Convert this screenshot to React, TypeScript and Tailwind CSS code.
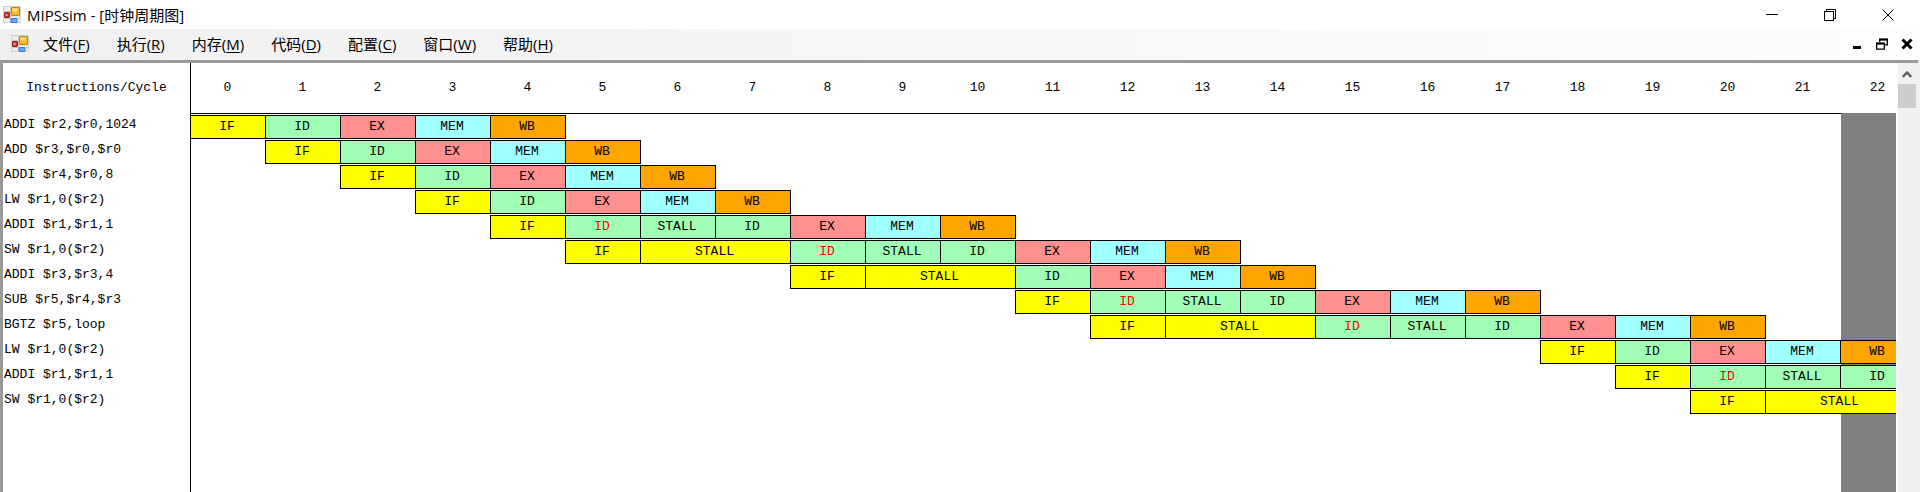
import React from "react";

type Stage = "IF" | "ID" | "EX" | "MEM" | "WB";

interface Segment {
  stage: Stage;
  label?: string;
  span?: number;
  hazard?: boolean;
}

interface Instruction {
  text: string;
  start: number;
  segments: Segment[];
}

const CYCLES = 23;
const EXECUTED = 22;

const IF: Segment = { stage: "IF" };
const ID: Segment = { stage: "ID" };
const ID_HAZARD: Segment = { stage: "ID", hazard: true };
const ID_STALL: Segment = { stage: "ID", label: "STALL" };
const IF_STALL: Segment = { stage: "IF", label: "STALL", span: 2 };
const EX: Segment = { stage: "EX" };
const MEM: Segment = { stage: "MEM" };
const WB: Segment = { stage: "WB" };

const program: Instruction[] = [
  { text: "ADDI $r2,$r0,1024", start: 0, segments: [IF, ID, EX, MEM, WB] },
  { text: "ADD $r3,$r0,$r0", start: 1, segments: [IF, ID, EX, MEM, WB] },
  { text: "ADDI $r4,$r0,8", start: 2, segments: [IF, ID, EX, MEM, WB] },
  { text: "LW $r1,0($r2)", start: 3, segments: [IF, ID, EX, MEM, WB] },
  { text: "ADDI $r1,$r1,1", start: 4, segments: [IF, ID_HAZARD, ID_STALL, ID, EX, MEM, WB] },
  { text: "SW $r1,0($r2)", start: 5, segments: [IF, IF_STALL, ID_HAZARD, ID_STALL, ID, EX, MEM, WB] },
  { text: "ADDI $r3,$r3,4", start: 8, segments: [IF, IF_STALL, ID, EX, MEM, WB] },
  { text: "SUB $r5,$r4,$r3", start: 11, segments: [IF, ID_HAZARD, ID_STALL, ID, EX, MEM, WB] },
  { text: "BGTZ $r5,loop", start: 12, segments: [IF, IF_STALL, ID_HAZARD, ID_STALL, ID, EX, MEM, WB] },
  { text: "LW $r1,0($r2)", start: 18, segments: [IF, ID, EX, MEM, WB] },
  { text: "ADDI $r1,$r1,1", start: 19, segments: [IF, ID_HAZARD, ID_STALL, ID] },
  { text: "SW $r1,0($r2)", start: 20, segments: [IF, IF_STALL] },
];

const stageColor: Record<Stage, string> = {
  IF: "bg-[#ffff00]",
  ID: "bg-[#a0ffb4]",
  EX: "bg-[#ff9090]",
  MEM: "bg-[#a0ffff]",
  WB: "bg-[#ffa500]",
};

const menus: [string, string][] = [
  ["文件", "F"],
  ["执行", "R"],
  ["内存", "M"],
  ["代码", "D"],
  ["配置", "C"],
  ["窗口", "W"],
  ["帮助", "H"],
];

function AppIcon() {
  return (
    <svg viewBox="0 0 18 18" className="size-[18px] shrink-0" aria-hidden="true">
      <rect x="0.5" y="0.5" width="17" height="16" fill="#ececec" stroke="#d0d0d0" />
      <path d="M7.5 1v16M1 12.5h16M1 5.5h6" stroke="#c8c8c8" />
      <rect x="8.5" y="1.5" width="8" height="8" rx="0.5" fill="#f5b92a" stroke="#b98512" />
      <rect x="9.5" y="2.5" width="5" height="3" fill="#ffe07a" />
      <rect x="1.5" y="6.5" width="5" height="5" rx="0.5" fill="#c93527" stroke="#9a2118" />
      <rect x="2.5" y="8" width="2" height="2" fill="#f0a198" />
      <rect x="8" y="12.5" width="6" height="4" rx="0.5" fill="#6aa8f6" stroke="#3a76d0" />
    </svg>
  );
}

function TitleBar() {
  return (
    <header className="flex h-[29px] shrink-0 items-center bg-white pl-[3px]">
      <AppIcon />
      <h1 className="ml-1.5 flex-1 text-[15px] leading-5">MIPSsim - [时钟周期图]</h1>
      <button aria-label="Minimize" className="flex h-7 w-[58px] items-center justify-center">
        <svg viewBox="0 0 12 12" className="size-3" stroke="#000" fill="none" shapeRendering="crispEdges">
          <path d="M0 5.5h12" />
        </svg>
      </button>
      <button aria-label="Restore" className="flex h-7 w-[58px] items-center justify-center">
        <svg viewBox="0 0 12 12" className="size-3" stroke="#000" fill="none" shapeRendering="crispEdges">
          <path d="M0.5 2.5h9v9h-9zM2.5 2.5v-2h9v9h-2" />
        </svg>
      </button>
      <button aria-label="Close" className="mr-[3px] flex h-7 w-[58px] items-center justify-center">
        <svg viewBox="0 0 12 12" className="size-3" stroke="#000" fill="none">
          <path d="M0.5 0.5l11 11M11.5 0.5l-11 11" />
        </svg>
      </button>
    </header>
  );
}

function MenuBar() {
  return (
    <nav className="flex h-[31px] shrink-0 items-center bg-linear-to-r from-[#f0f0f0] to-[#fdfdfd] pb-0.5 pl-[11px]">
      <AppIcon />
      <div className="ml-3.5 flex flex-1 gap-[27px]">
        {menus.map(([name, key]) => (
          <button key={key} className="text-[15px] leading-5">
            {name}(<span className="underline underline-offset-2">{key}</span>)
          </button>
        ))}
      </div>
      <div className="flex items-center gap-[13px] pr-[7px]">
        <button aria-label="Minimize child window">
          <svg viewBox="0 0 12 12" className="size-3">
            <path d="M2 8h8v3H2z" />
          </svg>
        </button>
        <button aria-label="Restore child window">
          <svg viewBox="0 0 12 12" className="size-3" fill="none" stroke="#000">
            <path d="M3.7 4V1.5h7.6v5.3H9" strokeWidth="1.3" />
            <path d="M3 1.5h9" strokeWidth="2" />
            <path d="M0.7 5.5h7.6v5.6H0.7z" strokeWidth="1.3" />
            <path d="M0 5.5h9" strokeWidth="2" />
          </svg>
        </button>
        <button aria-label="Close child window">
          <svg viewBox="0 0 12 12" className="size-3" stroke="#000" strokeWidth="3">
            <path d="M1.5 1.5l9 9M10.5 1.5l-9 9" />
          </svg>
        </button>
      </div>
    </nav>
  );
}

function emptyCells(from: number, to: number) {
  return Array.from({ length: Math.max(0, to - from) }, (_, i) => (
    <td key={`empty-${from + i}`} className={from + i < EXECUTED ? "bg-white p-0" : "p-0"} />
  ));
}

function InstructionRow({ text, start, segments }: Instruction) {
  let cycle = start;
  const cells = segments.map((segment, i) => {
    const inside = cycle < EXECUTED;
    cycle += segment.span ?? 1;
    return (
      <td key={i} colSpan={segment.span ?? 1} className={`p-0 pt-px ${inside ? "bg-white" : ""}`}>
        <div
          className={`-ml-px flex h-6 items-center justify-center border border-black pr-0.5 ${stageColor[segment.stage]} ${segment.hazard ? "text-[#ff0000]" : "text-black"}`}
        >
          {segment.label ?? segment.stage}
        </div>
      </td>
    );
  });
  return (
    <tr className="h-[25px]">
      <th scope="row" className="border-r border-black bg-white p-0 pb-1 pl-px text-left font-normal">
        {text}
      </th>
      {emptyCells(0, start)}
      {cells}
      {emptyCells(cycle, CYCLES)}
    </tr>
  );
}

function CycleChart() {
  return (
    <div className="min-w-0 flex-1 overflow-hidden bg-[#808080]">
      <table className="h-full w-[1913px] table-fixed border-separate border-spacing-0 font-['Liberation_Mono',monospace] text-[13px] leading-4">
        <colgroup>
          <col className="w-[188px]" />
          {Array.from({ length: CYCLES }, (_, i) => (
            <col key={i} className="w-[75px]" />
          ))}
        </colgroup>
        <thead>
          <tr className="h-[51px]">
            <th scope="col" className="border-r border-black bg-white p-0 pb-0.5 font-normal">
              Instructions/Cycle
            </th>
            {Array.from({ length: CYCLES }, (_, i) => (
              <th
                key={i}
                scope="col"
                className={`border-b bg-white p-0 pr-0.5 font-normal ${i < EXECUTED ? "border-black" : "border-[#808080]"}`}
              >
                {i}
              </th>
            ))}
          </tr>
        </thead>
        <tbody>
          {program.map((instruction, i) => (
            <InstructionRow key={i} {...instruction} />
          ))}
          <tr>
            <td className="border-r border-black bg-white p-0" />
            <td colSpan={EXECUTED} className="bg-white p-0" />
            <td className="p-0" />
          </tr>
        </tbody>
      </table>
    </div>
  );
}

function ScrollBar() {
  return (
    <div className="flex w-[22px] shrink-0 flex-col border-l-2 border-white bg-[#f0f0f0]">
      <button aria-label="Scroll up" className="flex h-[21px] w-[18px] items-center justify-center">
        <svg viewBox="0 0 10 8" className="h-2 w-2.5" fill="none" stroke="#606060" strokeWidth="2.4">
          <path d="M0.8 6.8L5 2.4l4.2 4.4" />
        </svg>
      </button>
      <div className="h-6 w-[18px] bg-[#cdcdcd]" />
    </div>
  );
}

export default function App() {
  return (
    <div className="flex h-screen flex-col overflow-hidden bg-[#f0f0f0] font-['Open_Sans','Noto_Sans_CJK_SC',sans-serif] text-black">
      <TitleBar />
      <MenuBar />
      <main className="mr-0.5 flex min-h-0 flex-1 border-t-3 border-l-3 border-[#999999]">
        <CycleChart />
        <ScrollBar />
      </main>
    </div>
  );
}
